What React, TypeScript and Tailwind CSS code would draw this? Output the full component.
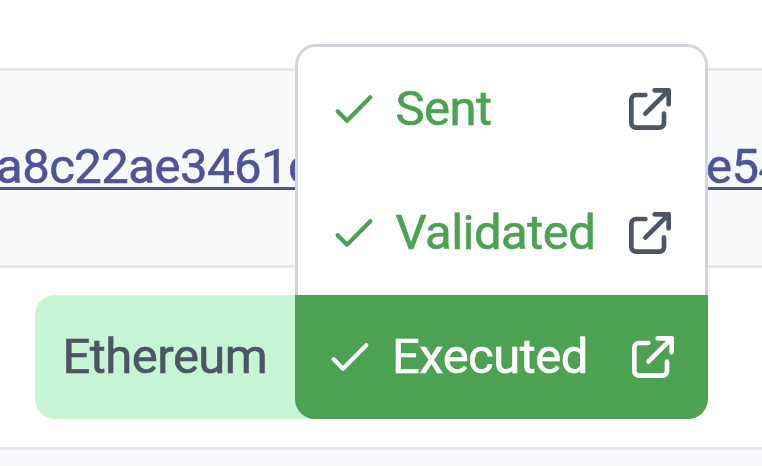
type IconProps = { className?: string };

function Check({ className = "" }: IconProps) {
  return (
    <svg viewBox="0 0 24 24" fill="none" stroke="currentColor" strokeWidth="1.8" strokeLinecap="round" strokeLinejoin="round" className={`h-14 w-14 shrink-0 ${className}`}>
      <path d="M5 13l4 4L19 7" />
    </svg>
  );
}

function ExternalLink({ className = "" }: IconProps) {
  return (
    <svg viewBox="0 0 24 24" fill="none" stroke="currentColor" strokeWidth="2" strokeLinecap="round" strokeLinejoin="round" className={`h-14 w-14 shrink-0 ${className}`}>
      <path d="M10 6H6a2 2 0 00-2 2v10a2 2 0 002 2h10a2 2 0 002-2v-4M14 4h6m0 0v6m0-6L10 14" />
    </svg>
  );
}

function Step({ label }: { label: string }) {
  return (
    <div className="flex h-[124px] items-center pl-[27.5px] text-[#4da153]">
      <Check />
      <span className="ml-[14px] flex-1">{label}</span>
      <ExternalLink className="mr-[27px] text-[#4b5563]" />
    </div>
  );
}

export default function App() {
  return (
    <div className="relative h-[466px] w-[762px] overflow-hidden bg-white font-['Roboto',sans-serif] text-[49px] leading-[56px] tracking-[-0.52px] whitespace-nowrap [-webkit-text-stroke:0.6px_currentColor]">
      <div className="h-[68px]" />
      <div className="flex h-[197px] items-center justify-between border-t-3 border-[#e5e7eb] bg-[#f9fafc] pb-[2px] text-[#4f5398]">
        <div className="-ml-[4px] underline decoration-[3px] underline-offset-[4px]">a8c22ae3461c</div>
        <div className="w-[56px] underline decoration-[3px] underline-offset-[4px]">e54</div>
      </div>
      <div className="h-[182px] border-t-3 border-[#e5e7eb] pt-[27px] pl-[35px]">
        <div className="flex h-[124px] w-[330px] items-center rounded-[20px] bg-[#c7f4d4] pl-[27.5px] text-[#4b5563]">Ethereum</div>
      </div>
      <div className="h-[19px] border-t-3 border-[#e5e7eb] bg-[#f9fafc]" />

      <div className="absolute top-[44px] left-[295px] w-[413px]">
        <div className="h-[251px] rounded-t-[21px] border-x-3 border-t-3 border-[#d1d5db] bg-white">
          <Step label="Sent" />
          <Step label="Validated" />
        </div>
        <div className="flex h-[124px] items-center rounded-b-[20px] bg-[#4da153] pl-[27px] text-white">
          <Check />
          <span className="ml-[14px] flex-1">Executed</span>
          <ExternalLink className="mr-[27px]" />
        </div>
      </div>
    </div>
  );
}
